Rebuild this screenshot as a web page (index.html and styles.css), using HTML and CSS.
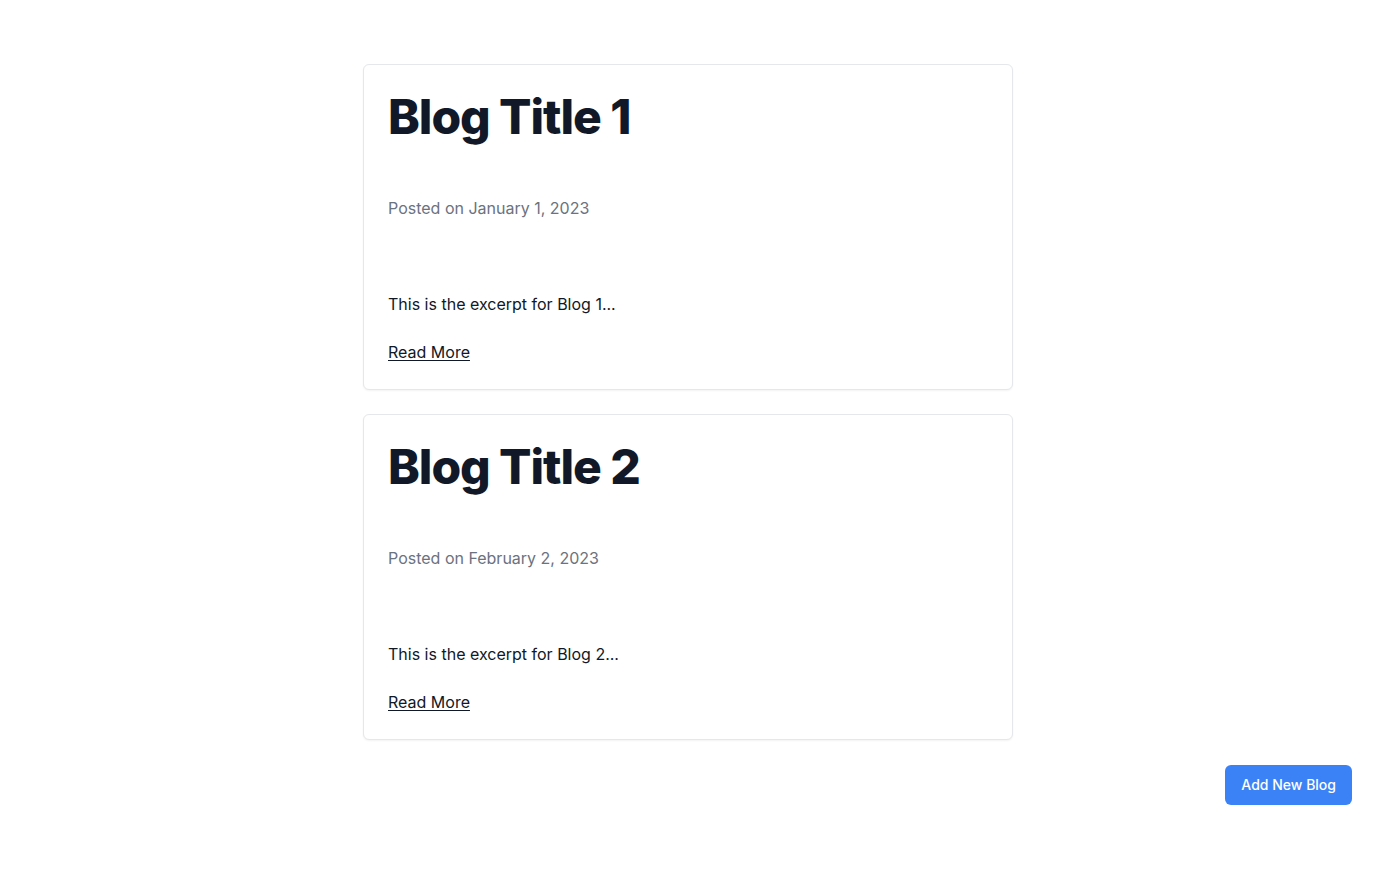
FILE: index.html
```html
<!DOCTYPE html>
<html>
<head>
<meta charset="utf-8">
<link rel="stylesheet" href="styles.css">
</head>
<body>
<main class="page">
  <div class="list">
    <article class="card">
      <h1 class="title">Blog Title 1</h1>
      <p class="meta">Posted on January 1, 2023</p>
      <p class="excerpt">This is the excerpt for Blog 1...</p>
      <a class="more" href="#">Read More</a>
    </article>
    <article class="card">
      <h1 class="title">Blog Title 2</h1>
      <p class="meta">Posted on February 2, 2023</p>
      <p class="excerpt">This is the excerpt for Blog 2...</p>
      <a class="more" href="#">Read More</a>
    </article>
  </div>
  <div class="actions">
    <button class="add">Add New Blog</button>
  </div>
</main>
</body>
</html>
```
FILE: styles.css
```css
* { box-sizing: border-box; }
html, body { margin: 0; padding: 0; background: #ffffff; }
body {
  font-family: Inter, "Noto Sans", sans-serif;
  color: #111827;
}
.page {
  padding: 64px 24px 0;
}
.list {
  width: 650px;
  margin: 0 auto;
  display: flex;
  flex-direction: column;
  gap: 24px;
}
.card {
  border: 1px solid #e5e7eb;
  border-radius: 6px;
  padding: 24px 24px 25px;
  background: #fff;
  box-shadow: 0 1px 2px rgba(0,0,0,0.05);
}
.title {
  margin: 0 0 51px;
  font-size: 48px;
  line-height: 56px;
  font-weight: 800;
  letter-spacing: -0.022em;
  color: #111827;
}
.meta {
  margin: 0 0 72px;
  font-size: 16px;
  line-height: 24px;
  color: #6b7280;
}
.excerpt {
  margin: 0 0 24px;
  font-size: 16px;
  line-height: 24px;
  color: #111827;
}
.more {
  display: block;
  width: max-content;
  font-size: 16px;
  line-height: 24px;
  color: #111827;
  text-decoration: underline;
  text-underline-offset: 2px;
}
.actions {
  display: flex;
  justify-content: flex-end;
  margin-top: 25px;
}
.add {
  font-family: Inter, "Noto Sans", sans-serif;
  font-size: 14px;
  line-height: 20px;
  font-weight: 500;
  color: #ffffff;
  background: #3b82f6;
  border: none;
  border-radius: 6px;
  padding: 10px 16px;
  cursor: pointer;
}
```
